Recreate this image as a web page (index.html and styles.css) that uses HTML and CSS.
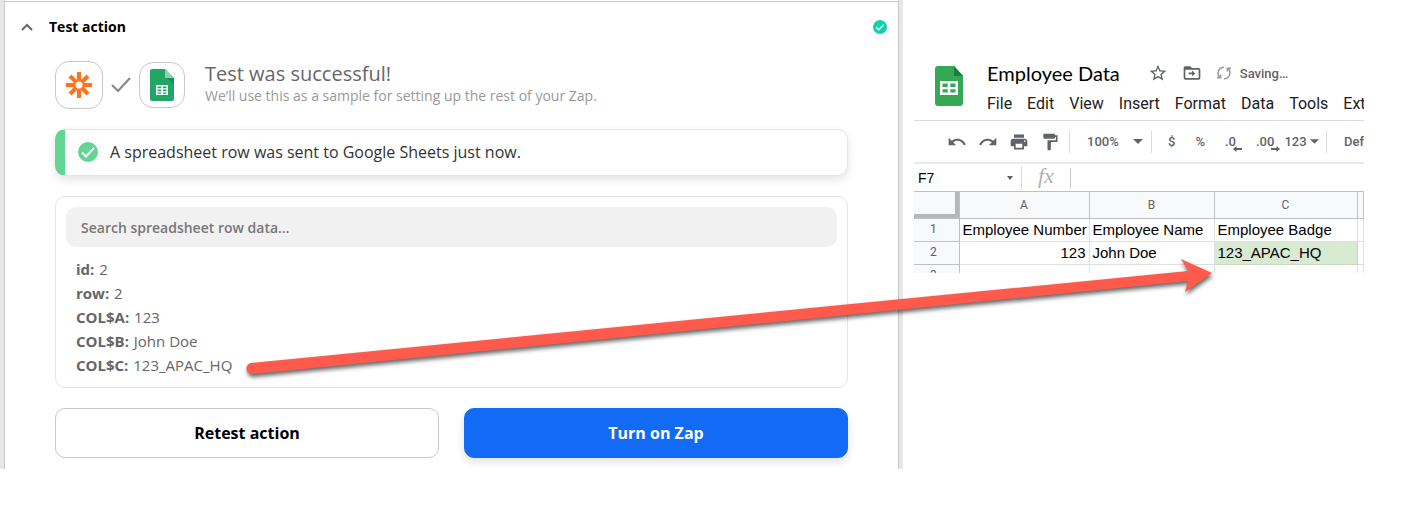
FILE: index.html
```html
<!DOCTYPE html>
<html lang="en">
<head>
	<meta charset="utf-8">
	<title>Test action</title>
	<link rel="stylesheet" href="styles.css">
</head>
<body>
	<div class="page">
		<main class="zap">
			<button class="zap-header">
				<svg class="chevron" width="12" height="8" viewBox="0 0 12 8"><path d="M1 7l5-5 5 5" fill="none" stroke="#666" stroke-width="2"/></svg>
				<span>Test action</span>
				<svg class="header-status" width="14" height="14" viewBox="0 0 14 14"><circle cx="7" cy="7" r="7" fill="#13d0ac"/><path d="M3.200 7.200l2.500 2.500 5-5" fill="none" stroke="#fff" stroke-width="1.500"/></svg>
			</button>
			<div class="zap-body">
				<div class="summary">
					<div class="app app-zapier">
						<svg width="26" height="26" viewBox="0 0 26 26">
							<g stroke="#ff731f" stroke-width="4.200">
								<path d="M13 0v9.500M13 16.500v9.500M0 13h9.500M16.500 13h9.500M4 4l6.500 6.500M15.500 15.500l6.500 6.500M22 4l-6.500 6.500M10.500 15.500L4 22"/>
							</g>
						</svg>
					</div>
					<svg class="step-check" width="20" height="16" viewBox="0 0 20 16"><path d="M1 8l6 6L19 1" fill="none" stroke="#888" stroke-width="2.200"/></svg>
					<div class="app app-sheets">
						<svg width="24" height="32" viewBox="0 0 24 32">
							<path d="M2 0h13l9 9v21a2 2 0 0 1-2 2H2a2 2 0 0 1-2-2V2a2 2 0 0 1 2-2z" fill="#23a566"/>
							<path d="M15 0l9 9h-9z" fill="#8ed1b1"/>
							<path d="M16 9h8v6z" fill="#1c8f57"/>
							<path d="M6 16h12v10H6zM7.500 17.500v1.800h3.700v-1.800zM12.800 17.500v1.800h3.700v-1.800zM7.500 20.600v1.700h3.700v-1.700zM12.800 20.600v1.700h3.700v-1.700zM7.500 23.500v1.300h3.700v-1.300zM12.800 23.500v1.300h3.700v-1.300z" fill="#fff" fill-rule="evenodd"/>
						</svg>
					</div>
					<div class="summary-text">
						<h1>Test was successful!</h1>
						<p>We’ll use this as a sample for setting up the rest of your Zap.</p>
					</div>
				</div>

				<div class="alert">
					<svg width="20" height="20" viewBox="0 0 20 20"><circle cx="10" cy="10" r="10" fill="#62d493"/><path d="M4 10.500l4 4 8-8.500" fill="none" stroke="#fff" stroke-width="2"/></svg>
					<p>A spreadsheet row was sent to Google Sheets just now.</p>
				</div>

				<div class="result">
					<input class="search" type="text" placeholder="Search spreadsheet row data…" aria-label="Search spreadsheet row data">
					<ul class="fields">
						<li><b>id:</b> 2</li>
						<li><b>row:</b> 2</li>
						<li><b>COL$A:</b> 123</li>
						<li><b>COL$B:</b> John Doe</li>
						<li><b>COL$C:</b> 123_APAC_HQ</li>
					</ul>
				</div>

				<div class="actions">
					<button class="btn">Retest action</button>
					<button class="btn btn-primary">Turn on Zap</button>
				</div>
			</div>
		</main>

		<section class="sheet">
			<header class="sheet-header">
				<svg class="sheet-logo" width="28" height="40" viewBox="0 0 28 40">
					<path d="M3 0h16l9 10v27a3 3 0 0 1-3 3H3a3 3 0 0 1-3-3V3a3 3 0 0 1 3-3z" fill="#34a853"/>
					<path d="M19 0l9 10h-9z" fill="#188038"/>
					<path d="M5 15h18v14H5zM7.500 17.500v3.500h5.200v-3.500zM15.300 17.500v3.500h5.200v-3.500zM7.500 23.200v3.300h5.200v-3.300zM15.300 23.200v3.300h5.200v-3.300z" fill="#fff" fill-rule="evenodd"/>
				</svg>
				<div class="sheet-heading">
					<div class="title-row">
						<h2>Employee Data</h2>
						<button aria-label="Star"><svg width="20" height="20" viewBox="0 0 24 24"><path d="M22 9.240l-7.190-.62L12 2 9.190 8.630 2 9.240l5.460 4.730L5.820 21 12 17.270 18.180 21l-1.630-7.030L22 9.240zM12 15.400l-3.760 2.270 1-4.280-3.320-2.880 4.380-.38L12 6.100l1.710 4.040 4.380.38-3.320 2.880 1 4.280L12 15.400z"/></svg></button>
						<button aria-label="Move"><svg width="20" height="20" viewBox="0 0 24 24"><path d="M20 6h-8l-2-2H4c-1.100 0-2 .9-2 2v12c0 1.100.9 2 2 2h16c1.100 0 2-.9 2-2V8c0-1.100-.9-2-2-2zm0 12H4V8h16v10zM12 16l4-3.500-4-3.500v2.500H8v2h4z"/></svg></button>
						<span class="saving">
							<svg width="16" height="16" viewBox="0 0 16 16"><g fill="none" stroke="#999" stroke-width="1.500"><path d="M8 2.200A6 6 0 0 0 3.600 12.200M1 12.700h3.600V9.400"/><path d="M8 13.800A6 6 0 0 0 12.400 3.800M15 3.300h-3.600v3.300"/></g></svg>
							Saving…
						</span>
					</div>
					<nav class="menu">
						<button>File</button>
						<button>Edit</button>
						<button>View</button>
						<button>Insert</button>
						<button>Format</button>
						<button>Data</button>
						<button>Tools</button>
						<button>Ext</button>
					</nav>
				</div>
			</header>

			<div class="toolbar">
				<div class="group icons">
					<button aria-label="Undo"><svg width="20" height="20" viewBox="0 0 24 24"><path d="M12.500 8c-2.650 0-5.050.99-6.900 2.600L2 7v9h9l-3.620-3.620c1.390-1.160 3.160-1.880 5.120-1.880 3.540 0 6.550 2.310 7.600 5.500l2.370-.78C21.080 11.030 17.150 8 12.500 8z"/></svg></button>
					<button aria-label="Redo"><svg width="20" height="20" viewBox="0 0 24 24"><path d="M18.400 10.600C16.550 8.990 14.150 8 11.500 8c-4.650 0-8.580 3.030-9.960 7.220L3.900 16c1.050-3.190 4.050-5.500 7.600-5.500 1.950 0 3.730.72 5.120 1.880L13 16h9V7l-3.600 3.600z"/></svg></button>
					<button aria-label="Print"><svg width="20" height="20" viewBox="0 0 24 24"><path d="M19 8H5c-1.660 0-3 1.340-3 3v6h4v4h12v-4h4v-6c0-1.660-1.340-3-3-3zm-3 11H8v-5h8v5zm3-7c-.55 0-1-.45-1-1s.45-1 1-1 1 .45 1 1-.45 1-1 1zm-1-9H6v4h12V3z"/></svg></button>
					<button aria-label="Paint format"><svg width="20" height="20" viewBox="0 0 24 24"><path d="M18 4V3c0-.55-.45-1-1-1H5c-.55 0-1 .45-1 1v4c0 .55.45 1 1 1h12c.55 0 1-.45 1-1V6h1v4H9v11c0 .55.45 1 1 1h2c.55 0 1-.45 1-1v-9h8V4h-3z"/></svg></button>
				</div>
				<button class="group zoom">100% <svg width="10" height="5" viewBox="0 0 10 5"><path d="M0 0h10L5 5z"/></svg></button>
				<div class="group formats">
					<button>$</button>
					<button>%</button>
					<button class="decimal">.0<svg width="9" height="6" viewBox="0 0 9 6"><path d="M0 3l3.500-3v2H9v2H3.500v2z"/></svg></button>
					<button class="decimal">.00<svg width="9" height="6" viewBox="0 0 9 6"><path d="M9 3L5.500 0v2H0v2h5.500v2z"/></svg></button>
					<button class="more">123 <svg width="9" height="5" viewBox="0 0 10 5"><path d="M0 0h10L5 5z"/></svg></button>
				</div>
				<button class="group font">Def</button>
			</div>

			<div class="formula-bar">
				<input class="name-box" type="text" value="F7" aria-label="Name box">
				<svg width="6" height="4" viewBox="0 0 6 4"><path d="M0 0h6L3 4z"/></svg>
				<span class="fx">fx</span>
				<input class="formula" type="text" aria-label="Formula">
			</div>

			<table class="grid">
				<colgroup><col class="col-num"><col class="col-a"><col class="col-b"><col class="col-c"><col></colgroup>
				<thead>
					<tr><th class="corner"></th><th>A</th><th>B</th><th>C</th><th></th></tr>
				</thead>
				<tbody>
					<tr><th>1</th><td>Employee Number</td><td>Employee Name</td><td>Employee Badge</td><td></td></tr>
					<tr><th>2</th><td class="number">123</td><td>John Doe</td><td class="filled">123_APAC_HQ</td><td></td></tr>
					<tr><th>3</th><td></td><td></td><td></td><td></td></tr>
				</tbody>
			</table>
		</section>

		<!-- arrow from the COL$C field to cell C2 -->
		<svg class="arrow" viewBox="0 0 1411 515">
			<path d="M251 363L1188 271L1181 259L1212 273L1185 292L1188 281L253 374A5 5 0 0 1 251 363z" fill="#ff5a4c"/>
		</svg>
	</div>
</body>
</html>
```
FILE: styles.css
```css
* {
	box-sizing: border-box;
}

body {
	margin: 0;
	background: #fff;
	font-family: "Open Sans", sans-serif;
}

h1, h2, p, ul {
	margin: 0;
	padding: 0;
}

button {
	padding: 0;
	border: 0;
	background: none;
	color: inherit;
	font: inherit;
	cursor: pointer;
}

svg {
	display: block;
	flex-shrink: 0;
}

.page {
	position: relative;
	display: grid;
	grid-template-columns: 301fr 150fr;
	gap: 11px;
	align-items: start;
	padding-right: 47px;
}

/* Zap editor */
.zap {
	min-width: 0;
	border: solid #e7e7e7;
	border-width: 0 4px;
	padding-top: 1px;
	box-shadow: inset 1px 0 #c8c8c8, inset -1px 0 #c8c8c8;
}

.zap-header {
	display: flex;
	align-items: center;
	width: 100%;
	height: 50px;
	padding: 0 12px 0 17px;
	border-top: 1px solid #c8c8c8;
	color: #000;
	font-size: 14px;
	font-weight: 700;
}

.chevron {
	margin-right: 16px;
}

.header-status {
	margin-left: auto;
}

.zap-body {
	padding: 10px 51px 11px;
}

.summary {
	display: flex;
	align-items: center;
	height: 48px;
	margin-bottom: 20px;
}

.app {
	display: flex;
	align-items: center;
	justify-content: center;
	width: 48px;
	height: 48px;
	border: 1px solid #c8c8c8;
	border-radius: 14px;
}

.app-sheets {
	width: 46px;
	height: 46px;
}

.step-check {
	margin: 0 8px;
}

.summary-text {
	margin-left: 20px;
	padding-bottom: 2px;
}

.summary-text h1 {
	color: #666;
	font-size: 20px;
	font-weight: 400;
	line-height: 24px;
}

.summary-text p {
	color: #999;
	font-size: 14px;
	line-height: 20px;
}

.alert {
	display: flex;
	align-items: center;
	gap: 12px;
	height: 47px;
	margin-bottom: 20px;
	padding: 0 0 2px 13px;
	border: 1px solid #e4e4e4;
	border-left: 10px solid #62d493;
	border-radius: 10px;
	box-shadow: 0 4px 10px rgba(0, 0, 0, 0.1);
	color: #333;
	font-size: 16px;
}

.result {
	margin-bottom: 20px;
	padding: 10px;
	border: 1px solid #e4e4e4;
	border-radius: 10px;
}

.search {
	display: block;
	width: 100%;
	height: 40px;
	padding: 0 15px;
	border: 0;
	border-radius: 10px;
	background: #f1f1f1;
	font: 600 14px "Open Sans", sans-serif;
}

.search::placeholder {
	color: #777;
}

.fields {
	padding: 10px 10px 0;
	list-style: none;
	color: #666;
	font-size: 15px;
	line-height: 24px;
}

.fields b {
	margin-right: 1px;
}

.actions {
	display: grid;
	grid-template-columns: 1fr 1fr;
	gap: 25px;
}

.btn {
	height: 50px;
	border: 1px solid #c8c8c8;
	border-radius: 10px;
	color: #000;
	font-size: 16px;
	font-weight: 700;
}

.btn-primary {
	border-color: #136bf5;
	background: #136bf5;
	box-shadow: 0 4px 8px rgba(0, 0, 0, 0.12);
	color: #fff;
}

/* Spreadsheet */
.sheet {
	min-width: 0;
	height: 273px;
	padding-top: 60px;
	overflow: hidden;
	font-family: Roboto, sans-serif;
	color: #5f6368;
	fill: #5f6368;
}

.sheet-header {
	display: flex;
	gap: 24px;
	height: 61px;
	padding-left: 21px;
	border-bottom: 1px solid #dadce0;
}

.sheet-logo {
	margin-top: 6px;
}

.title-row {
	display: flex;
	align-items: center;
	gap: 14px;
	height: 26px;
}

.title-row h2 {
	margin-right: 14px;
	color: #000;
	font-family: Lato, sans-serif;
	font-size: 20px;
	font-weight: 400;
}

.saving {
	display: flex;
	align-items: center;
	gap: 8px;
	font-size: 13px;
	font-weight: 500;
}

.menu {
	display: flex;
	gap: 15px;
	height: 34px;
	color: #202124;
	font-size: 16px;
}

.toolbar {
	display: flex;
	align-items: center;
	height: 43px;
	border-bottom: 2px solid #e8eaed;
	font-size: 13px;
	font-weight: 500;
}

.group {
	display: flex;
	align-items: center;
	flex-shrink: 0;
	height: 22px;
}

.group + .group {
	border-left: 1px solid #dadce0;
}

.icons {
	gap: 11px;
	padding: 0 9px 0 33px;
}

.zoom {
	justify-content: space-between;
	width: 82px;
	padding: 0 8px 0 17px;
}

.formats {
	width: 175px;
	padding-left: 6px;
}

.formats button {
	padding: 0 10px;
}

.decimal {
	position: relative;
}

.decimal svg {
	position: absolute;
	right: 4px;
	bottom: -3px;
}

.formats .more {
	display: flex;
	align-items: center;
	gap: 3px;
	padding: 0;
}

.font {
	padding-left: 17px;
}

.formula-bar {
	display: flex;
	align-items: center;
	height: 27px;
}

.formula-bar input {
	height: 20px;
	padding: 0;
	border: 0;
	color: #000;
	font: 14px "Liberation Sans", Arial, sans-serif;
}

.formula-bar .name-box {
	width: 93px;
	padding-left: 4px;
}

.fx {
	height: 24px;
	margin-left: 8px;
	padding: 0 16px;
	border-left: 1px solid #dadce0;
	color: #b0b0b0;
	font: italic 22px/20px "Liberation Serif", serif;
}

.formula-bar .formula {
	flex: 1;
	min-width: 0;
	border-left: 1px solid #c8c8c8;
}

.grid {
	width: 100%;
	border-collapse: collapse;
	table-layout: fixed;
}

.col-num {
	width: 45px;
}

.col-a {
	width: 130px;
}

.col-b {
	width: 125px;
}

.col-c {
	width: 143px;
}

.grid th,
.grid td {
	height: 23px;
	padding: 0 3px;
	border: 1px solid #e0e0e0;
	border-left: 0;
	white-space: nowrap;
}

.grid th {
	border-color: #c0c0c0;
	background: #f8f9fa;
	font-size: 12px;
	font-weight: 400;
}

.grid tbody th {
	padding: 0 6px 3px 0;
}

.grid thead th {
	height: 27px;
}

.grid .corner {
	box-shadow: inset -4px -4px #b7b7b7;
}

.grid td {
	color: #000;
	font: 15px/20px "Liberation Sans", Arial, sans-serif;
}

.grid .number {
	text-align: right;
}

.grid .filled {
	border-color: #c3d9bb;
	background: #d9ead3;
}

.arrow {
	position: absolute;
	top: 0;
	left: 0;
	width: 100%;
	filter: drop-shadow(1px 3px 2px rgba(0, 0, 0, 0.6));
	pointer-events: none;
}
```
